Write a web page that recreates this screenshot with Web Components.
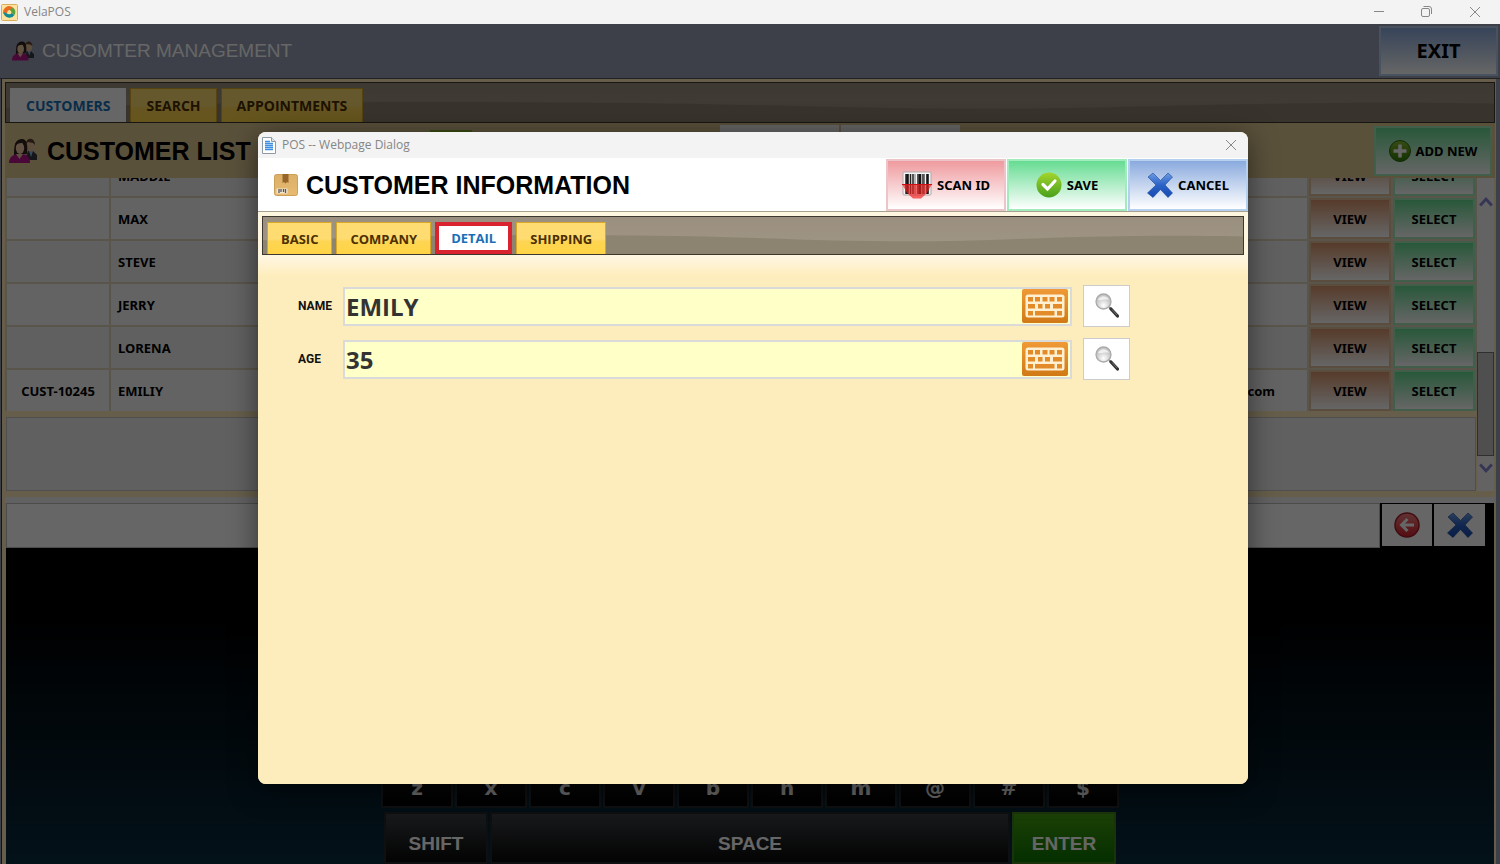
<!DOCTYPE html>
<html lang="en">
<head>
<meta charset="utf-8">
<title>VelaPOS</title>
<style>
html, body { height: 100%; margin: 0; overflow: hidden; }
body { font-family: "Open Sans", sans-serif; }
</style>
</head>
<body>
<pos-app></pos-app>
<script>
var icons = {
	logo: `<svg viewBox="0 0 17 17"><rect x=".5" y=".5" width="16" height="16" rx="1" fill="#fce3a0" stroke="#dcae5a"/><path d="M2.500 10A6 6 0 0 1 12 3.500L9.800 6.200A3 3 0 0 0 6 9.500z" fill="#ea6a1f"/><path d="M12 3.500A6 6 0 0 1 13.500 11L10.500 9A3 3 0 0 0 8.500 6z" fill="#5aa23c"/><path d="M2.500 8A6 6 0 0 0 13.500 11L10.500 9A3 3 0 0 1 6 9.500z" fill="#168a91"/></svg>`,
	people: `<svg viewBox="0 0 28 28"><path d="M17 20l2-6h5l4 4v5H16z" fill="#34383f"/><path d="M20 14l2 6 2-6z" fill="#8fb7e8"/><ellipse cx="21.500" cy="8.500" rx="4.200" ry="6" fill="#e8c09b"/><path d="M17 7c0-7 9-7 9 1l-2-2-5-1z" fill="#5d402d"/><path d="M5 18c0-5 0-15 7-16 6-1 7 6 6 15z" fill="#30211d"/><path d="M0 26c0-7 5-9 11-9s10 2 10 9z" fill="#b8168c"/><path d="M7 17h7l-3.500 5z" fill="#efc8a5"/><ellipse cx="11" cy="11" rx="4.200" ry="6" fill="#f0cba9"/><path d="M6 11c1-4 3-5 8-5l2 5c2-8-2-8-5-8s-6 3-5 8z" fill="#30211d"/></svg>`,
	page: `<svg viewBox="0 0 14 17"><path d="M.5.5h9l4 4v12H.5z" fill="#fff" stroke="#909aa5"/><path d="M9.500.5v4h4" fill="#dbe5ef" stroke="#909aa5"/><path d="M3 4.500h5M3 6.500h8M3 8.500h8M3 10.500h8M3 12.500h8" stroke="#3e8fe0" stroke-width="1.400"/></svg>`,
	box: `<svg viewBox="0 0 24 22"><defs><linearGradient id="bx" x2="0" y2="1"><stop stop-color="#dcaf68"/><stop offset="1" stop-color="#e7bb72"/></linearGradient></defs><rect x=".5" y=".5" width="23" height="21" rx="2" fill="url(#bx)" stroke="#cda05a"/><path d="M8.500 0h6v9l-1.500-1-1.500 1.500L10 8l-1.500 1z" fill="#96652c"/><rect x="2.500" y="14.500" width="11" height="5" fill="#f2e6cf"/><path d="M5 15v4M7 15v3M9.500 15v3M11.500 15v4" stroke="#555" stroke-width="1.300"/></svg>`,
	scan: `<svg viewBox="0 0 30 28"><rect x="1" y="1" width="28" height="23" rx="1" fill="#f4f4f4" stroke="#aaa"/><path d="M4 3v20M8.500 3v20M11 3v20M16 3v20M21 3v20" stroke="#222" stroke-width="1.500"/><path d="M5.500 3v20M18 3v20M25.500 3v20" stroke="#151515" stroke-width="2.600"/><path d="M13 3v20M22.500 3v20" stroke="#777"/><path d="M0 13h30l-5 9-6 5.500h-8L5 22z" fill="#f02020" opacity=".68"/><path d="M0 13.500h30" stroke="#cf1111"/></svg>`,
	check: `<svg viewBox="0 0 26 26"><defs><linearGradient id="ck" x2="0" y2="1"><stop stop-color="#a3d52c"/><stop offset="1" stop-color="#48a01c"/></linearGradient></defs><circle cx="13" cy="13" r="12.500" fill="url(#ck)"/><path d="M7 12.500l4.500 4.500L19 9" fill="none" stroke="#fff" stroke-width="3.200" stroke-linecap="round"/></svg>`,
	cross: `<svg viewBox="0 0 26 26"><defs><linearGradient id="cr" x2="0" y2="1"><stop stop-color="#6c9be2"/><stop offset=".5" stop-color="#2b62c5"/><stop offset="1" stop-color="#164bb4"/></linearGradient></defs><path d="M1 5l5-4 7.500 7.500L21 1l4.500 4-7.500 8 7.500 8-4.500 4.500-7.500-8L6 25.500.5 21 9 13z" fill="url(#cr)" stroke="#194797" stroke-width=".6"/></svg>`,
	plus: `<svg viewBox="0 0 22 22"><defs><linearGradient id="pl" x2="0" y2="1"><stop stop-color="#87bd35"/><stop offset="1" stop-color="#2f7c05"/></linearGradient></defs><circle cx="11" cy="11" r="10.500" fill="url(#pl)" stroke="#306c0c"/><path d="M11 4.500v13M4.500 11h13" stroke="#fff" stroke-width="3.500"/></svg>`,
	back: `<svg viewBox="0 0 26 26"><defs><linearGradient id="bk" x2="0" y2="1"><stop stop-color="#f48080"/><stop offset="1" stop-color="#d51f2c"/></linearGradient></defs><circle cx="13" cy="13" r="12" fill="url(#bk)" stroke="#a1202a" stroke-width="1.500"/><path d="M20 13H8M13.500 7L7.500 13l6 6" fill="none" stroke="#fff" stroke-width="3"/></svg>`,
	keys: `<svg viewBox="0 0 46 34"><defs><linearGradient id="ky" x2="0" y2="1"><stop stop-color="#ef9937"/><stop offset="1" stop-color="#d07916"/></linearGradient></defs><rect width="46" height="34" rx="2" fill="url(#ky)"/><rect x="3.500" y="5.500" width="39" height="23" rx="2.500" fill="#fff0d2"/><g fill="#e28b28"><path d="M6 8h5v4.500H6zM13 8h5v4.500h-5zM20.500 8h5v4.500h-5zM27.500 8h5v4.500h-5zM35 8h5v4.500h-5z"/><path d="M6 15h7v4.500H6zM16 15h4.500v4.500H16zM23 15h5v4.500h-5zM31 15h9v4.500h-9z"/><path d="M6 22h5v4.500H6zM13 22h19.500v4.500H13zM35 22h5v4.500h-5z"/></g></svg>`,
	search: `<svg viewBox="0 0 24 26"><defs><radialGradient id="sg" cx=".5" cy=".75"><stop stop-color="#fff"/><stop offset="1" stop-color="#c5c5c5"/></radialGradient></defs><path d="M14 14l3 3" stroke="#888" stroke-width="2"/><path d="M16 16l6.500 7" stroke="#333" stroke-width="3.200" stroke-linecap="round"/><path d="M17 16.500l5 5.500" stroke="#888" stroke-width=".7"/><circle cx="8.500" cy="8.500" r="7.500" fill="url(#sg)" stroke="#aaa" stroke-width="1.300"/><path d="M3 7c2-5 9-5 11 0-3-1.500-8 1-11 0z" fill="#fff" opacity=".7"/></svg>`,
	min: `<svg viewBox="0 0 12 12"><path d="M1 5.500h10" stroke="#888"/></svg>`,
	restore: `<svg viewBox="0 0 12 12" fill="none" stroke="#888"><rect x=".5" y="2.500" width="8" height="8" rx="1.500"/><path d="M2.500 .5H8a2.500 2.500 0 0 1 2.500 2.500v5"/></svg>`,
	close: `<svg viewBox="0 0 12 12"><path d="M1 1l10 10M11 1L1 11" stroke="#888"/></svg>`,
	up: `<svg viewBox="0 0 12 12"><path d="M1 9l5-5.500L11 9" fill="none" stroke="#8a86d8" stroke-width="2.500"/></svg>`,
	down: `<svg viewBox="0 0 12 12"><path d="M1 3l5 5.500L11 3" fill="none" stroke="#8a86d8" stroke-width="2.500"/></svg>`
}

class PosElement extends HTMLElement {
	constructor() {
		super()
		this.attachShadow({mode: 'open'})
	}
	connectedCallback() {
		this.shadowRoot.innerHTML = this.render()
	}
}

class PosIcon extends PosElement {
	render() {
		return `<style>
:host { display: inline-flex; flex: none; width: 26px; height: 26px; }
svg { width: 100%; height: 100%; }
</style>${icons[this.getAttribute('name')]}`
	}
}
customElements.define('pos-icon', PosIcon)

class PosTitlebar extends PosElement {
	render() {
		return `<style>
:host { display: flex; flex: none; align-items: center; gap: 6px; background: #f3f3f3; color: #858585; font-size: 12px; line-height: 16px; }
::slotted([slot=buttons]) { display: flex; }
.space { flex: 1; }
</style><slot></slot><span class="space"></span><slot name="buttons"></slot>`
	}
}
customElements.define('pos-titlebar', PosTitlebar)

class PosButton extends PosElement {
	render() {
		return `<style>
:host { display: inline-block; --top: #8aaade; --edge: #b4d0ee; }
:host([tone=red]) { --top: #ef9a9e; --edge: #ecc5c8; }
:host([tone=green]) { --top: #66dc92; --edge: #a2ebbc; }
:host([tone=orange]) { --top: #d8946a; --edge: #e3c09c; }
:host([tone=plain]) { --top: #fff; --edge: #fff; }
button { display: flex; align-items: center; justify-content: center; gap: 5px; box-sizing: border-box; width: 100%; height: 100%; margin: 0; padding: 0; border: 2px solid var(--edge); background: linear-gradient(var(--top), #fff); color: #000; font: inherit; white-space: nowrap; }
</style><button type="button" aria-label="${this.getAttribute('label') || this.textContent.trim()}"><slot></slot></button>`
	}
}
customElements.define('pos-button', PosButton)

class PosTab extends PosElement {
	render() {
		return `<style>
:host { display: flex; }
button { margin: 0; padding: 0 var(--tab-pad, 15px); border: 1px solid #d9a82a; border-bottom: none; background: linear-gradient(#ffdc72 50%, #fed552 60%, #ffd445); color: #4b3000; font: inherit; }
:host([active]) button { border-color: #fff; background: #fff; color: #1670b8; }
:host([marked]) button { padding: 0 12px; border: 4px solid #d9232e; }
</style><button type="button" role="tab"><slot></slot></button>`
	}
}
customElements.define('pos-tab', PosTab)

class PosTabs extends PosElement {
	render() {
		return `<style>
:host { display: grid; flex: none; box-sizing: border-box; border: 1px solid #3d382f; background: linear-gradient(#9b907f, #a09685); font-weight: bold; }
svg { grid-area: 1 / 1; width: 100%; height: 0; min-height: 100%; }
div { grid-area: 1 / 1; display: flex; gap: 4px; padding: 5px 4px 0; }
</style>
<svg viewBox="0 0 100 38" preserveAspectRatio="none"><path d="M0 24C12 20 25 17 38 19C50 20 56 25 66 25C76 25 84 17 100 20V38H0z" fill="#8d8371"/></svg>
<div role="tablist"><slot></slot></div>`
	}
}
customElements.define('pos-tabs', PosTabs)

class CustomerTable extends PosElement {
	render() {
		var rows = [['', 'MADDIE', ''], ['', 'MAX', ''], ['', 'STEVE', ''], ['', 'JERRY', ''], ['', 'LORENA', ''], ['CUST-10245', 'EMILIY', 'com']]
		return `<style>
:host { display: flex; flex-direction: column; justify-content: flex-end; height: 233px; overflow: hidden; background: #e0d4b8; font: bold 13px/16px "Noto Sans", sans-serif; }
table { flex: none; width: 100%; margin-bottom: -2px; table-layout: fixed; border-spacing: 2px; }
td { box-sizing: border-box; height: 41px; padding: 0; background: #f0f0f0; }
tr:nth-child(even) td, tr:last-child td { background: #f8f8f8; }
.code { width: 102px; text-align: center; }
.name { padding-left: 7px; }
.mail { padding-right: 32px; text-align: right; }
.act { width: 82px; }
pos-button { display: block; height: 41px; }
</style>
<table><tbody>${rows.map(r => `<tr>
	<td class="code">${r[0]}</td>
	<td class="name">${r[1]}</td>
	<td class="mail">${r[2]}</td>
	<td class="act"><pos-button tone="orange">VIEW</pos-button></td>
	<td class="act"><pos-button tone="green">SELECT</pos-button></td>
</tr>`).join('')}</tbody></table>`
	}
}
customElements.define('customer-table', CustomerTable)

class PosScrollbar extends PosElement {
	render() {
		return `<style>
:host { display: flex; flex-direction: column; align-items: center; flex: none; box-sizing: border-box; width: 17px; padding: 17px 0 16px; background: #f7f7f7; }
pos-icon { width: 14px; height: 14px; }
.track { flex: 1; display: flex; flex-direction: column; justify-content: flex-end; width: 100%; }
.thumb { box-sizing: border-box; height: 104px; margin-bottom: 5px; border: 1px solid #777; background: #c5c5c5; }
</style><pos-icon name="up"></pos-icon><div class="track"><div class="thumb"></div></div><pos-icon name="down"></pos-icon>`
	}
}
customElements.define('pos-scrollbar', PosScrollbar)

class PosKeyboard extends PosElement {
	render() {
		return `<style>
:host { display: flex; flex-direction: column; flex: 1; min-height: 0; background: linear-gradient(#000 30%, #092c40); overflow: hidden; }
.entry { display: flex; gap: 2px; height: 45px; background: #000; padding-right: 9px; }
input { flex: 1; min-width: 0; box-sizing: border-box; border: 1px solid #bbb; background: #fff; font: 24px "Open Sans", sans-serif; }
.entry pos-button { width: 50px; height: 42px; padding-top: 1px; }
.entry pos-button + pos-button { width: 51px; }
.keys { flex: 1; display: flex; flex-direction: column; justify-content: flex-end; align-items: center; gap: 4px; }
.row { display: flex; gap: 2px; }
.row button { box-sizing: border-box; height: 52px; margin: 0; padding: 12px 0 0; border: 2px solid #23262a; background: linear-gradient(#3c4045, #080808); color: #fff; font: bold 19px/24px "Liberation Sans", sans-serif; }
.row.letters button { width: 72px; background: linear-gradient(#222, #000); font: bold 20px/24px "DejaVu Sans", sans-serif; }
.row .side { width: 104px; }
.row .space { width: 520px; }
.row .enter { border-color: #457f1c; background: linear-gradient(#47a010, #0b7500); }
</style>
<div class="entry"><input type="text" aria-label="Entry"><pos-button tone="plain" label="Backspace"><pos-icon name="back"></pos-icon></pos-button><pos-button tone="plain" label="Clear"><pos-icon name="cross"></pos-icon></pos-button></div>
<div class="keys">
	<div class="row letters">${'zxcvbnm@#$'.split('').map(k => `<button type="button">${k}</button>`).join('')}</div>
	<div class="row"><button type="button" class="side">SHIFT</button><button type="button" class="space">SPACE</button><button type="button" class="side enter">ENTER</button></div>
</div>`
	}
}
customElements.define('pos-keyboard', PosKeyboard)

class PosField extends PosElement {
	render() {
		return `<style>
:host { display: flex; align-items: center; height: 42px; }
label { width: 45px; color: #111; font: bold 12px/16px Roboto, sans-serif; }
.box { flex: 1; display: flex; box-sizing: border-box; height: 39px; padding-right: 2px; border: 2px solid #dadada; background: #ffffc8; }
input { flex: 1; min-width: 0; box-sizing: border-box; padding: 2px 1px 0; border: none; outline: none; background: none; color: #333; font: bold 24px/32px "Open Sans", sans-serif; }
button { margin: 0; padding: 0; border: none; background: none; }
.box pos-icon { width: 46px; height: 34px; }
.find { display: flex; align-items: center; justify-content: center; box-sizing: border-box; width: 47px; height: 42px; margin-left: 11px; border: 1px solid #ccc; background: #fff; }
.find pos-icon { width: 24px; height: 26px; }
</style>
<label for="value">${this.getAttribute('label')}</label>
<div class="box"><input id="value" type="text" value="${this.getAttribute('value')}"><button type="button" aria-label="Keyboard"><pos-icon name="keys"></pos-icon></button></div>
<button type="button" class="find" aria-label="Search"><pos-icon name="search"></pos-icon></button>`
	}
}
customElements.define('pos-field', PosField)

class PosDialog extends PosElement {
	render() {
		return `<style>
:host { display: flex; flex-direction: column; border-radius: 8px; overflow: hidden; background: #feedbc; box-shadow: 0 4px 28px rgba(0, 0, 0, .5); }
pos-titlebar { height: 26px; padding: 0 11px 0 4px; }
.page { width: 14px; height: 17px; }
.x { width: 12px; height: 12px; }
header { display: flex; align-items: center; gap: 8px; height: 53px; padding: 0 0 0 16px; border-bottom: 1px solid #a9a18f; background: #fff; }
header > pos-icon { width: 24px; height: 22px; }
h1 { flex: 1; margin: 0; font: bold 25px/32px "Liberation Sans", sans-serif; }
.actions { display: flex; gap: 1px; height: 52px; font: bold 13px/16px "Noto Sans", sans-serif; }
.actions pos-button { width: 120px; }
.scan { width: 30px; height: 28px; }
main { flex: 1; padding: 4px; background: linear-gradient(#fff6df 46px, #feedbc 64px); }
pos-tabs { --tab-pad: 13px; height: 39px; font-size: 13px; }
form { display: flex; flex-direction: column; gap: 11px; padding: 30px 114px 0 36px; }
</style>
<pos-titlebar><pos-icon class="page" name="page"></pos-icon><span>POS -- Webpage Dialog</span><pos-icon class="x" slot="buttons" name="close"></pos-icon></pos-titlebar>
<header>
	<pos-icon name="box"></pos-icon>
	<h1>CUSTOMER INFORMATION</h1>
	<div class="actions">
		<pos-button tone="red"><pos-icon class="scan" name="scan"></pos-icon>SCAN ID</pos-button>
		<pos-button tone="green"><pos-icon name="check"></pos-icon>SAVE</pos-button>
		<pos-button><pos-icon name="cross"></pos-icon>CANCEL</pos-button>
	</div>
</header>
<main>
	<pos-tabs><pos-tab>BASIC</pos-tab><pos-tab>COMPANY</pos-tab><pos-tab active marked>DETAIL</pos-tab><pos-tab>SHIPPING</pos-tab></pos-tabs>
	<form>
		<pos-field label="NAME" value="EMILY"></pos-field>
		<pos-field label="AGE" value="35"></pos-field>
	</form>
</main>`
	}
}
customElements.define('pos-dialog', PosDialog)

class PosApp extends PosElement {
	render() {
		return `<style>
:host { display: flex; flex-direction: column; position: relative; height: 100vh; background: #98a0b6; overflow: hidden; }
.window { height: 24px; padding: 0 19px 0 1px; }
.logo { width: 17px; height: 17px; }
.buttons { gap: 36px; }
.buttons pos-icon { width: 12px; height: 12px; }
.head { display: flex; flex: none; align-items: center; gap: 8px; height: 54px; padding: 0 2px 0 12px; color: #fff; border-bottom: 1px solid #555; }
.head pos-icon { width: 22px; height: 22px; }
.head h1 { flex: 1; margin: 0; font: 19px/24px "Liberation Sans", sans-serif; }
.head pos-button { width: 119px; height: 50px; font: bold 20px/24px "Noto Sans", sans-serif; }
.body { display: flex; flex-direction: column; flex: 1; min-height: 0; margin: 0 4px 0 1px; padding: 3px 1px 0 3px; border-left: 1px solid #333; background: #feebbc; }
pos-tabs { height: 41px; font-size: 14px; }
.list { display: flex; flex: none; align-items: center; gap: 10px; height: 55px; padding: 0 3px 0 4px; background: #e2ca94; }
.list > pos-icon { width: 28px; height: 28px; }
.list h2 { margin: 0; font: bold 25px/32px "Liberation Sans", sans-serif; }
.list pos-button { width: 118px; height: 50px; font: bold 13px/16px "Noto Sans", sans-serif; }
.list pos-button pos-icon { width: 22px; height: 22px; }
.filters { flex: 1; display: flex; align-items: center; gap: 2px; padding-left: 169px; }
.filters i { width: 119px; height: 51px; background: #fff; }
.filters .go { width: 42px; height: 42px; margin-right: 246px; background: #8ab828; }
.scroll { display: flex; flex: none; margin-right: 1px; }
.left { flex: 1; }
.note { box-sizing: border-box; height: 74px; margin: 6px 1px 0; border: 1px solid #c5c5c5; background: #efefef; }
.rule { flex: none; height: 6px; margin-top: 6px; background: #f3f3f3; }
pos-keyboard { margin: 0 1px; }
.shade { position: absolute; inset: 24px 0 0; display: flex; padding: 108px 252px 80px 258px; background: rgba(0, 0, 0, .6); }
pos-dialog { flex: 1; }
</style>
<pos-titlebar class="window"><pos-icon class="logo" name="logo"></pos-icon><span>VelaPOS</span>
	<span class="buttons" slot="buttons"><pos-icon name="min"></pos-icon><pos-icon name="restore"></pos-icon><pos-icon name="close"></pos-icon></span></pos-titlebar>
<div class="head"><pos-icon name="people"></pos-icon><h1>CUSOMTER MANAGEMENT</h1><pos-button>EXIT</pos-button></div>
<div class="body">
	<pos-tabs><pos-tab active>CUSTOMERS</pos-tab><pos-tab>SEARCH</pos-tab><pos-tab>APPOINTMENTS</pos-tab></pos-tabs>
	<div class="list"><pos-icon name="people"></pos-icon><h2>CUSTOMER LIST</h2><div class="filters"><i class="go"></i><i></i><i></i></div><pos-button tone="green"><pos-icon name="plus"></pos-icon>ADD NEW</pos-button></div>
	<div class="scroll">
		<div class="left"><customer-table></customer-table><div class="note"></div></div>
		<pos-scrollbar></pos-scrollbar>
	</div>
	<div class="rule"></div>
	<pos-keyboard></pos-keyboard>
</div>
<div class="shade"><pos-dialog role="dialog" aria-label="Customer information"></pos-dialog></div>`
	}
}
customElements.define('pos-app', PosApp)
</script>
</body>
</html>
